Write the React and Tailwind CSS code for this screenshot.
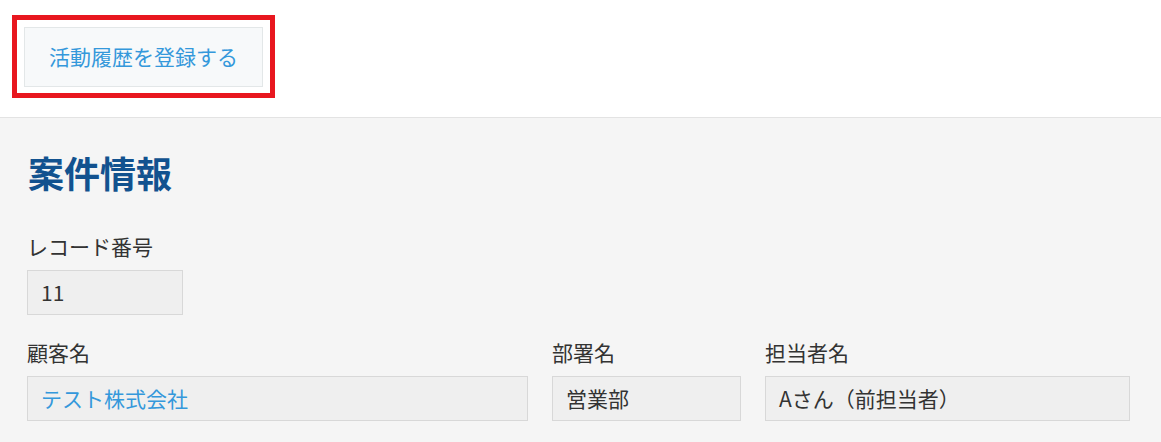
const Field = ({ label, value, width, link }) => {
  return (
    <div className="flex flex-col" style={{ width }}>
      <div className="text-[21px] leading-[28px] text-[#333333]">{label}</div>
      <div className="mt-[10px] h-[45px] border border-[#d8d8d8] bg-[#efefef] px-[13px] flex items-center">
        <span className={link ? "text-[21px] text-[#3498db]" : "text-[21px] text-[#333333]"}>{value}</span>
      </div>
    </div>
  );
};

const App = () => {
  return (
    <div
      className="w-[1161px] h-[442px] overflow-hidden bg-white"
      style={{ fontFamily: '"Noto Sans CJK JP", "Noto Sans", sans-serif' }}
    >
      <div className="h-[117px] pt-[15px] pl-[12px]">
        <div className="w-[263px] h-[83px] border-[5px] border-[#e8171f] flex items-center justify-center">
          <button className="w-[239px] h-[60px] border border-[#e3e7e8] bg-[#f7f9fa] text-[21px] text-[#3498db]">
            活動履歴を登録する
          </button>
        </div>
      </div>
      <div className="h-[325px] border-t border-[#e3e3e3] bg-[#f5f5f5] pl-[27px]">
        <h2 className="mt-[32px] pl-[1px] text-[36px] leading-[44px] font-bold text-[#12528f]">案件情報</h2>
        <div className="mt-[38px]">
          <Field label="レコード番号" value="11" width="156px" />
        </div>
        <div className="mt-[23px] flex gap-[24px]">
          <Field label="顧客名" value="テスト株式会社" width="501px" link />
          <Field label="部署名" value="営業部" width="189px" />
          <Field label="担当者名" value="Aさん（前担当者）" width="365px" />
        </div>
      </div>
    </div>
  );
};

export default App;
